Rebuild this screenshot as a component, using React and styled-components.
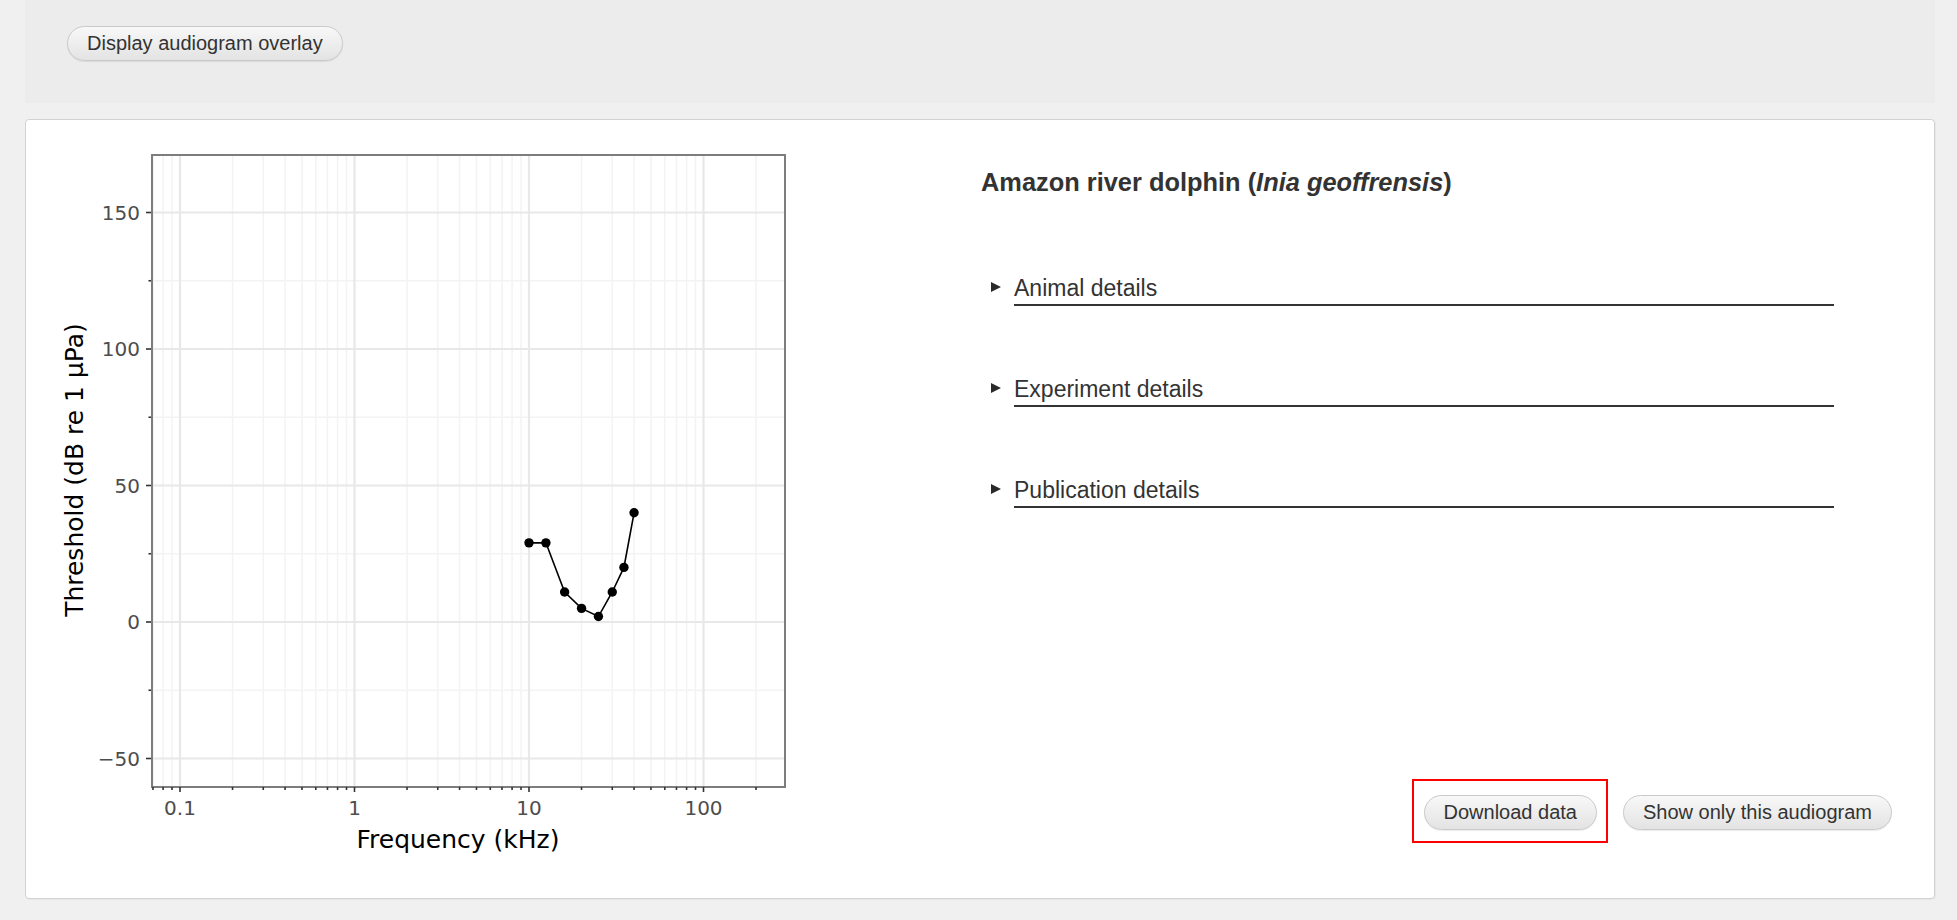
import React from "react"
import styled, { createGlobalStyle } from "styled-components"

const GlobalStyle = createGlobalStyle`
  html, body {
    margin: 0;
    padding: 0;
    background: #f0f0f0;
  }
  body {
    font-family: "Liberation Sans", Arial, sans-serif;
    color: #333;
  }
`

const Page = styled.div`
  padding: 0 22px 21px 25px;
`

const Well = styled.div`
  background: #ececec;
  height: 103px;
  box-sizing: border-box;
  padding: 26px 0 0 42px;
`

const Button = styled.button`
  font-family: "Liberation Sans", Arial, sans-serif;
  font-size: 20px;
  color: #333;
  height: 35px;
  padding: 0 19px;
  border: 1px solid #cacaca;
  border-radius: 18px;
  background: linear-gradient(#f8f8f8, #e3e3e3);
  box-shadow: 0 1px 1px rgba(0, 0, 0, 0.08);
  cursor: pointer;
`

const Panel = styled.div`
  margin-top: 16px;
  height: 780px;
  box-sizing: border-box;
  background: #fff;
  border: 1px solid #d2d2d2;
  border-radius: 4px;
  box-shadow: 1px 1px 1px rgba(0, 0, 0, 0.04);
  padding: 20px 42px 20px 20px;
  display: grid;
  grid-template-columns: 935px 911px;
`

const Chart = styled.svg`
  display: block;
`

const TickLabel = styled.text`
  font-family: "DejaVu Sans", sans-serif;
  font-size: 20px;
  fill: #4d4d4d;
`

const AxisTitle = styled.text`
  font-family: "DejaVu Sans", sans-serif;
  font-size: 25px;
  fill: #000;
`

const Side = styled.div`
  display: flex;
  flex-direction: column;
`

const Title = styled.h2`
  margin: 27px 0 0;
  font-size: 25.4px;
  line-height: 30px;
  font-weight: bold;
  color: #333;
`

const Details = styled.details`
  margin: ${p => (p.$first ? 78 : 70)}px 0 0 10px;
`

const Summary = styled.summary`
  display: flex;
  align-items: flex-start;
  list-style: none;
  cursor: pointer;
  &::-webkit-details-marker {
    display: none;
  }
`

const Arrow = styled.span`
  width: 0;
  height: 0;
  margin: 7px 13px 0 0;
  border-left: 10px solid #2a2a2a;
  border-top: 5.5px solid transparent;
  border-bottom: 5.5px solid transparent;
`

const Label = styled.span`
  width: 820px;
  font-size: 23px;
  line-height: 26px;
  padding-bottom: 3px;
  border-bottom: 2px solid #333;
`

const Actions = styled.div`
  margin-top: auto;
  margin-bottom: 35px;
  display: flex;
  justify-content: flex-end;
  align-items: flex-start;
  gap: 15px;
`

const Highlight = styled.div`
  border: 2px solid #ff0000;
  padding: 14px 9px 11px 10px;
`

const SideButton = styled(Button)`
  margin-top: 16px;
`

// plot coordinates are page pixels (viewBox offset to the panel content box)
const L = 152
const R = 785
const T = 155
const B = 787
const X = f => 529 + 174.5 * Math.log10(f / 10)
const Y = v => 622 - 2.73 * v

const minorX = []
for (const d of [0.01, 0.1, 1, 10, 100]) {
  for (let m = 2; m <= 9; m++) {
    const x = X(m * d)
    if (x > L && x < R) minorX.push({ x, f: m * d })
  }
}
const majorX = [0.1, 1, 10, 100]
const majorY = [-50, 0, 50, 100, 150]
const minorY = [-25, 25, 75, 125]

const data = [
  [10, 29], [12.5, 29], [16, 11], [20, 5],
  [25, 2], [30, 11], [35, 20], [40, 40],
]

const Audiogram = () => (
  <Chart width="935" height="738" viewBox="46 140 935 738">
    {minorY.map(v => (
      <line key={"my" + v} x1={L} x2={R} y1={Y(v)} y2={Y(v)} stroke="#f3f3f3" strokeWidth="1.5" />
    ))}
    {minorX.map(({ x, f }) => (
      <line key={"mx" + f} x1={x} x2={x} y1={T} y2={B} stroke="#f3f3f3" strokeWidth="1.5" />
    ))}
    {majorY.map(v => (
      <line key={"gy" + v} x1={L} x2={R} y1={Y(v)} y2={Y(v)} stroke="#e8e8e8" strokeWidth="2.2" />
    ))}
    {majorX.map(f => (
      <line key={"gx" + f} x1={X(f)} x2={X(f)} y1={T} y2={B} stroke="#e8e8e8" strokeWidth="2.2" />
    ))}
    <rect x={L} y={T} width={R - L} height={B - T} fill="none" stroke="#7d7d7d" strokeWidth="2" />

    {majorY.map(v => (
      <g key={"ty" + v}>
        <line x1={146} x2={151} y1={Y(v)} y2={Y(v)} stroke="#333" strokeWidth="1.6" />
        <TickLabel x={140} y={Y(v) + 7.3} textAnchor="end">
          {v < 0 ? "\u2212" + Math.abs(v) : v}
        </TickLabel>
      </g>
    ))}
    {minorY.map(v => (
      <line key={"tm" + v} x1={148.5} x2={151} y1={Y(v)} y2={Y(v)} stroke="#333" strokeWidth="1.6" />
    ))}
    {majorX.map(f => (
      <g key={"tx" + f}>
        <line x1={X(f)} x2={X(f)} y1={787} y2={792} stroke="#333" strokeWidth="1.6" />
        <TickLabel x={X(f)} y={815} textAnchor="middle">{f}</TickLabel>
      </g>
    ))}
    {minorX.map(({ x, f }) => (
      <line key={"tn" + f} x1={x} x2={x} y1={787} y2={790} stroke="#333" strokeWidth="1.6" />
    ))}

    <polyline
      points={data.map(([f, v]) => `${X(f)},${Y(v)}`).join(" ")}
      fill="none"
      stroke="#000"
      strokeWidth="1.6"
    />
    {data.map(([f, v]) => (
      <circle key={"p" + f} cx={X(f)} cy={Y(v)} r="4.7" fill="#000" />
    ))}

    <AxisTitle x={458} y={848} textAnchor="middle">Frequency (kHz)</AxisTitle>
    <AxisTitle transform="translate(83 470) rotate(-90)" textAnchor="middle">
      Threshold (dB re 1 µPa)
    </AxisTitle>
  </Chart>
)

const sections = ["Animal details", "Experiment details", "Publication details"]

const App = () => (
  <Page>
    <GlobalStyle />
    <Well>
      <Button>Display audiogram overlay</Button>
    </Well>
    <Panel>
      <Audiogram />
      <Side>
        <Title>
          Amazon river dolphin (<i>Inia geoffrensis</i>)
        </Title>
        {sections.map((s, i) => (
          <Details key={s} $first={i === 0}>
            <Summary>
              <Arrow />
              <Label>{s}</Label>
            </Summary>
          </Details>
        ))}
        <Actions>
          <Highlight>
            <Button>Download data</Button>
          </Highlight>
          <SideButton>Show only this audiogram</SideButton>
        </Actions>
      </Side>
    </Panel>
  </Page>
)

export default App
